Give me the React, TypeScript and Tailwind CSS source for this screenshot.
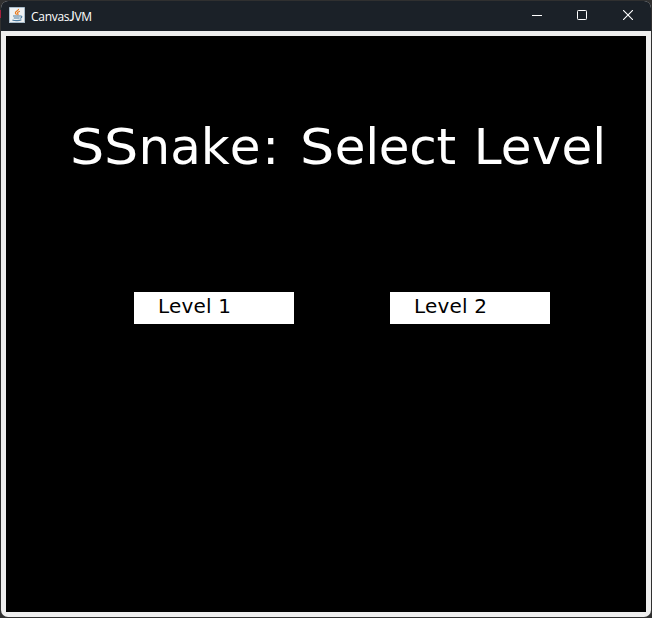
import React from "react";

function JavaIcon() {
  return (
    <svg width="16" height="16" viewBox="0 0 16 16" className="mb-0.5 shrink-0">
      <rect width="16" height="16" rx="0.6" fill="#a9bccb" />
      <rect x="1" y="1" width="14" height="14" fill="#eef1f3" />
      <path d="M9.6 1.8C9.9 3.7 6 4.2 6.4 5.9c.1.7.8 1.2 1.2 1.8M10.9 4.2C8.8 5 8 5.8 8.9 6.8c.4.5.1.9-.5 1.3" fill="none" stroke="#e8791c" strokeWidth="1.2" />
      <path d="M4 9h7.2M4.8 11h5.8M11.2 9c2.4-.4 1.9 2-.2 2.3M3.4 12.9c2 1 7.2 1 9-.1" fill="none" stroke="#4c7ca0" strokeWidth="1.1" />
    </svg>
  );
}

function TitleBar() {
  return (
    <header className="flex h-[30px] shrink-0 items-center bg-[#1b2128] pl-2 text-white">
      <JavaIcon />
      <span className="ml-1.5 flex-1 whitespace-nowrap font-['Open_Sans','Noto_Sans',sans-serif] text-[12px] leading-4 tracking-[-0.3px]">
        Canvas<span className="font-['Lato',sans-serif] text-[13px]">J</span>VM
      </span>
      <button aria-label="Minimize" className="flex h-full w-[44px] items-center justify-center pb-0.5">
        <svg width="10" height="10" viewBox="0 0 10 10"><path d="M0 5.5h10" stroke="white" /></svg>
      </button>
      <button aria-label="Maximize" className="flex h-full w-[46px] items-center justify-center pb-0.5">
        <svg width="10" height="10" viewBox="0 0 10 10"><rect x="0.5" y="0.5" width="9" height="9" rx="0.8" fill="none" stroke="white" /></svg>
      </button>
      <button aria-label="Close" className="flex h-full w-[46px] items-center justify-center pb-0.5">
        <svg width="10" height="10" viewBox="0 0 10 10"><path d="M0 0l10 10M10 0L0 10" stroke="white" strokeWidth="1.1" /></svg>
      </button>
    </header>
  );
}

function WideS() {
  return <span className="inline-block origin-left scale-x-[1.08]">S</span>;
}

function LevelButton({ label }: { label: string }) {
  return (
    <button className="flex h-8 w-40 bg-white pl-6 text-left text-[20px] leading-[28px] tracking-[0.2px] text-black">
      {label}
    </button>
  );
}

export default function App() {
  return (
    <div className="relative h-[618px] w-[652px] overflow-hidden bg-[#303030] p-px">
      <div className="absolute left-0 top-[10px] h-2 w-px bg-[#a3203c]" />
      <div className="flex h-full flex-col overflow-hidden rounded-[7px] bg-[#eeeeee]">
        <TitleBar />
        <main className="mx-[5px] mt-[5px] h-[576px] bg-black font-['DejaVu_Sans',Verdana,sans-serif]">
          <h1 className="whitespace-nowrap pl-16 pt-[81px] text-[50px] leading-[60px] text-white">
            <span className="tracking-[2.5px]"><WideS /><WideS /></span>nak<span className="tracking-[1.6px]">e</span>
            <span className="tracking-[2.7px]">: <WideS /></span>
            <span className="tracking-[-0.3px]">elec</span>
            <span className="tracking-[0.9px]">t </span>
            <span className="tracking-[0.1px]">Level</span>
          </h1>
          <div className="mt-[115px] flex gap-24 pl-32">
            <LevelButton label="Level 1" />
            <LevelButton label="Level 2" />
          </div>
        </main>
      </div>
    </div>
  );
}
